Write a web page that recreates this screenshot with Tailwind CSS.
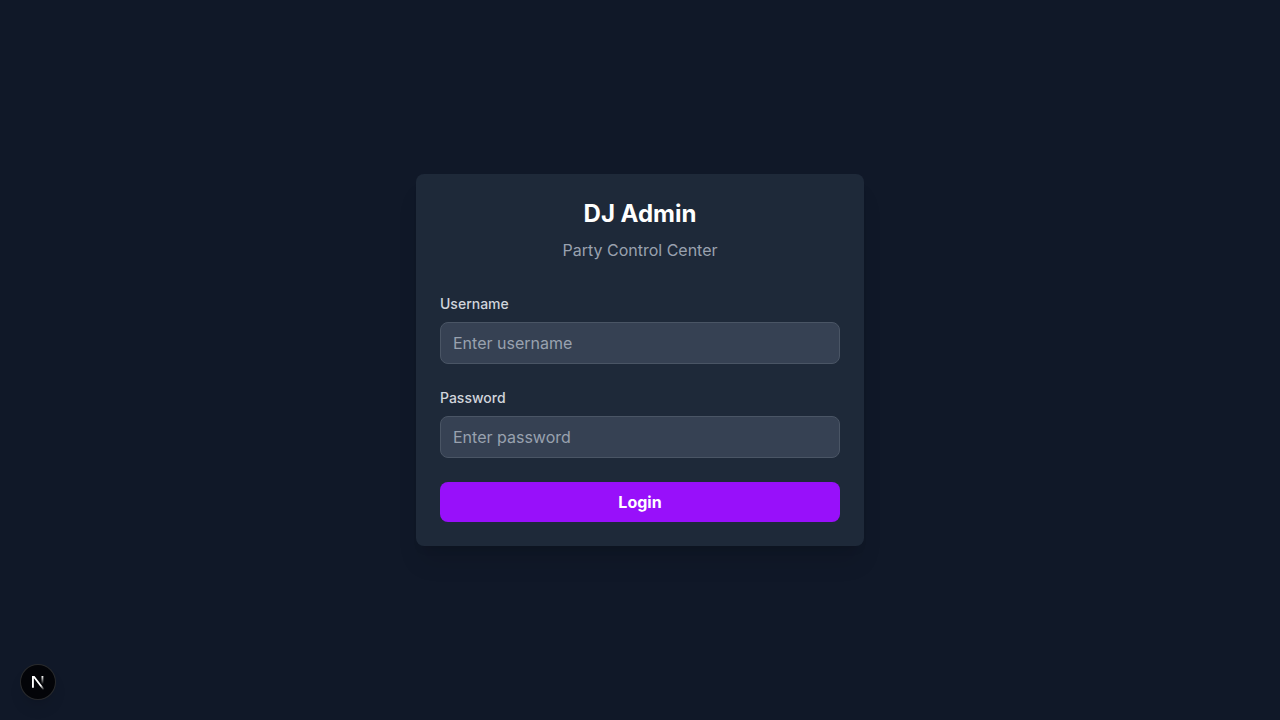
<!DOCTYPE html>
<html lang="en">
<head>
<meta charset="utf-8">
<meta name="viewport" content="width=device-width, initial-scale=1">
<title>DJ Admin</title>
<script src="https://cdn.jsdelivr.net/npm/@tailwindcss/browser@4"></script>
</head>
<body class="bg-gray-900 font-['Inter',sans-serif]">
<main class="min-h-screen flex items-center justify-center p-4">
  <div class="w-full max-w-md rounded-lg bg-gray-800 p-6 shadow-xl">
    <div class="mb-8 text-center">
      <h1 class="mb-2 text-2xl font-bold text-white">DJ Admin</h1>
      <p class="text-gray-400">Party Control Center</p>
    </div>
    <form class="space-y-6">
      <div>
        <label for="username" class="mb-2 block text-sm font-medium text-gray-300">Username</label>
        <input id="username" type="text" placeholder="Enter username" class="w-full rounded-lg border border-gray-600 bg-gray-700 px-3 py-2 text-white placeholder-gray-400">
      </div>
      <div>
        <label for="password" class="mb-2 block text-sm font-medium text-gray-300">Password</label>
        <input id="password" type="password" placeholder="Enter password" class="w-full rounded-lg border border-gray-600 bg-gray-700 px-3 py-2 text-white placeholder-gray-400">
      </div>
      <button type="button" class="w-full rounded-lg bg-purple-600 px-4 py-2 font-bold text-white">Login</button>
    </form>
  </div>
</main>
<button type="button" aria-label="Open developer tools" class="fixed bottom-5 left-5 flex size-9 items-center justify-center rounded-full bg-black/80 shadow-lg ring-1 ring-inset ring-white/15">
  <svg width="36" height="36" viewBox="0 0 36 36" fill="none">
    <defs>
      <linearGradient id="diag" x1="9.96" y1="11.12" x2="15.48" y2="17.97" gradientUnits="userSpaceOnUse"><stop stop-color="#fff"/><stop offset="0.604" stop-color="#fff" stop-opacity="0"/><stop offset="1" stop-color="#fff" stop-opacity="0"/></linearGradient>
      <linearGradient id="stem" x1="11.82" y1="1.4" x2="11.79" y2="9.63" gradientUnits="userSpaceOnUse"><stop stop-color="#fff"/><stop offset="1" stop-color="#fff" stop-opacity="0"/></linearGradient>
      <mask id="top" maskUnits="userSpaceOnUse" x="0" y="0" width="16" height="18"><rect width="16" height="18" fill="#fff"/><rect width="5" height="1.5" fill="#000"/></mask>
    </defs>
    <g transform="translate(10.6 10.5)" stroke-width="1.86">
      <path d="M13.3 15.2L2.34 1V13.2" stroke="url(#diag)" mask="url(#top)"/>
      <path d="M11.825 1.5V13.1" stroke="url(#stem)"/>
    </g>
  </svg>
</button>
</body>
</html>
